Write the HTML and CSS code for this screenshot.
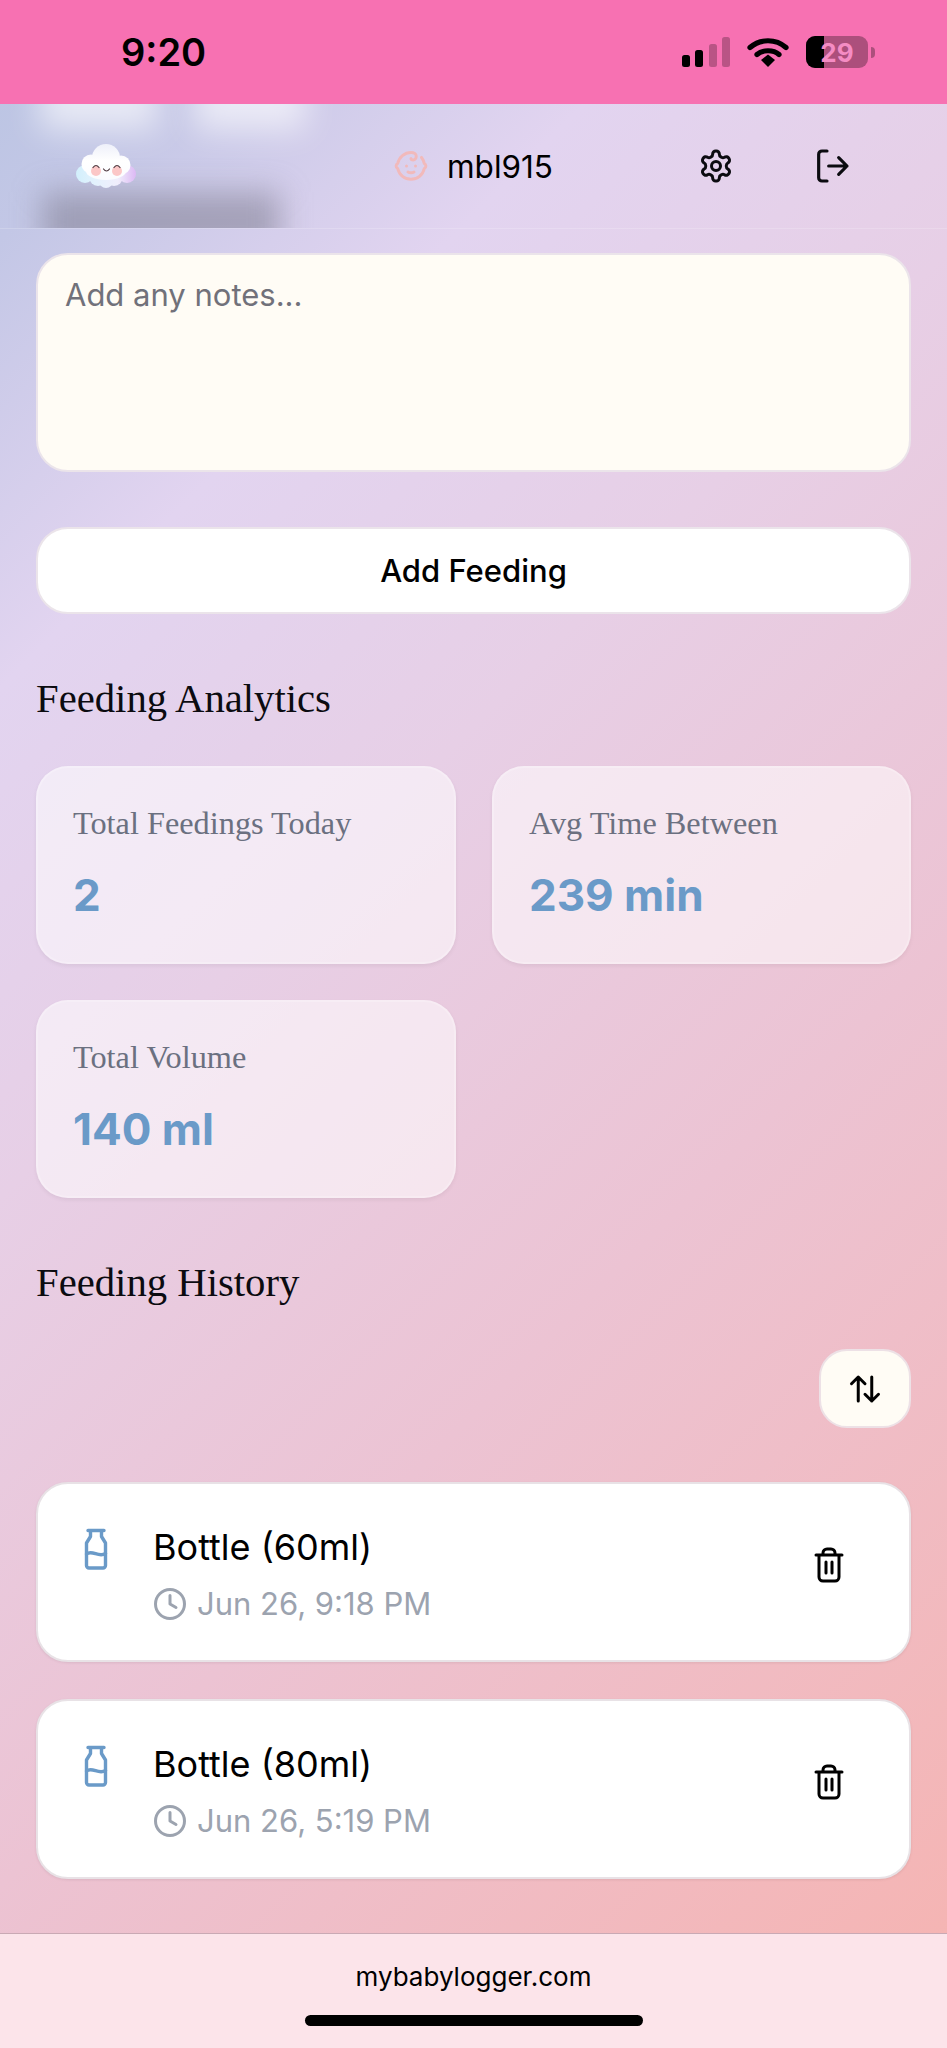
FILE: index.html
```html
<!DOCTYPE html>
<html>
<head>
  <meta charset="UTF-8">
  <title>My Baby Logger</title>
  <link rel="stylesheet" href="styles.css">
</head>
<body>
  <div class="status-bar">
    <span class="clock">9:20</span>
    <div class="status-icons">
      <svg class="signal" width="48" height="30" viewBox="0 0 48 30">
        <rect x="0" y="18" width="8" height="12" rx="2.500" fill="#000"/>
        <rect x="13" y="13" width="8" height="17" rx="2.500" fill="#000"/>
        <rect x="27" y="7" width="8" height="23" rx="2.500" fill="#000" opacity=".25"/>
        <rect x="40" y="0" width="8" height="30" rx="2.500" fill="#000" opacity=".25"/>
      </svg>
      <svg class="wifi" width="42" height="30" viewBox="0 0 42 30">
        <path d="M3 10.500C13 1.500 29 1.500 39 10.500" fill="none" stroke="#000" stroke-width="5.200" stroke-linecap="round"/>
        <path d="M10 17.500C15.500 12.500 26.500 12.500 32 17.500" fill="none" stroke="#000" stroke-width="5.200" stroke-linecap="round"/>
        <path d="M14 23L21 17.500L28 23L21 30Z" fill="#000"/>
      </svg>
      <div class="battery">
        <div class="battery-body">
          <div class="battery-fill"></div>
          <span class="battery-num">29</span>
        </div>
        <span class="battery-cap"></span>
      </div>
    </div>
  </div>

  <header class="app-header">
    <div class="blur-top blur-top-left"></div>
    <div class="blur-top blur-top-right"></div>
    <div class="blur-bottom"></div>
    <svg class="logo" width="60" height="44" viewBox="0 0 60 44">
      <defs>
        <linearGradient id="cloudBase" x1="0" y1="0" x2="60" y2="0" gradientUnits="userSpaceOnUse">
          <stop offset="0" stop-color="#d2effc"/>
          <stop offset=".3" stop-color="#e2f2fd"/>
          <stop offset=".7" stop-color="#f0eefc"/>
          <stop offset="1" stop-color="#dcb8f4"/>
        </linearGradient>
        <linearGradient id="cloudTop" x1="0" y1="0" x2="0" y2="34" gradientUnits="userSpaceOnUse">
          <stop offset="0" stop-color="#eef0fa"/>
          <stop offset=".5" stop-color="#ffffff"/>
          <stop offset="1" stop-color="#fbfcff"/>
        </linearGradient>
      </defs>
      <g fill="url(#cloudBase)">
        <circle cx="9" cy="30" r="9"/>
        <circle cx="51" cy="30" r="9"/>
        <circle cx="22" cy="33" r="9"/>
        <circle cx="38" cy="33" r="9"/>
        <circle cx="30" cy="37" r="7"/>
      </g>
      <g fill="url(#cloudTop)">
        <circle cx="30" cy="14" r="14"/>
        <circle cx="15" cy="20" r="9.500"/>
        <circle cx="45" cy="21" r="9.500"/>
        <ellipse cx="30" cy="27" rx="20" ry="9"/>
      </g>
      <circle cx="20" cy="27" r="5" fill="#fbb4b4" opacity=".75"/>
      <circle cx="41" cy="27" r="5" fill="#fbb4b4" opacity=".75"/>
      <path d="M17 23.500Q20 19.500 23 23.500M38 23.500Q41 19.500 44 23.500M27.500 25Q30.500 29 33.500 25" fill="none" stroke="#4f3a40" stroke-width="1.200" stroke-linecap="round"/>
    </svg>
    <div class="user">
      <svg class="baby-icon" width="36" height="36" viewBox="0 0 24 24" fill="none" stroke="#f6b6b3" stroke-width="2" stroke-linecap="round" stroke-linejoin="round">
        <path d="M9 12h.01M15 12h.01M10 16c.5.3 1.200.5 2 .5s1.500-.2 2-.5"/>
        <path d="M19 6.300a9 9 0 0 1 1.800 3.900 2 2 0 0 1 0 3.600 9 9 0 0 1-17.600 0 2 2 0 0 1 0-3.600A9 9 0 0 1 12 3c2 0 3.500 1.100 3.500 2.500s-.9 2.500-2 2.500c-.8 0-1.500-.4-1.500-1"/>
      </svg>
      <span class="username">mbl915</span>
    </div>
    <svg class="settings-btn" width="36" height="36" viewBox="0 0 24 24" fill="none" stroke="#0b0b10" stroke-width="2" stroke-linecap="round" stroke-linejoin="round">
      <path d="M12.220 2h-.44a2 2 0 0 0-2 2v.18a2 2 0 0 1-1 1.730l-.43.250a2 2 0 0 1-2 0l-.15-.080a2 2 0 0 0-2.730.730l-.22.380a2 2 0 0 0 .730 2.730l.15.100a2 2 0 0 1 1 1.720v.510a2 2 0 0 1-1 1.740l-.15.090a2 2 0 0 0-.730 2.730l.22.380a2 2 0 0 0 2.730.730l.15-.080a2 2 0 0 1 2 0l.43.250a2 2 0 0 1 1 1.730V20a2 2 0 0 0 2 2h.44a2 2 0 0 0 2-2v-.18a2 2 0 0 1 1-1.730l.43-.250a2 2 0 0 1 2 0l.15.080a2 2 0 0 0 2.730-.730l.22-.390a2 2 0 0 0-.730-2.730l-.15-.080a2 2 0 0 1-1-1.740v-.500a2 2 0 0 1 1-1.740l.15-.090a2 2 0 0 0 .730-2.730l-.22-.380a2 2 0 0 0-2.730-.730l-.15.080a2 2 0 0 1-2 0l-.43-.250a2 2 0 0 1-1-1.730V4a2 2 0 0 0-2-2z"/>
      <circle cx="12" cy="12" r="3"/>
    </svg>
    <svg class="logout-btn" width="40" height="40" viewBox="0 0 24 24" fill="none" stroke="#0b0b10" stroke-width="1.900" stroke-linecap="round" stroke-linejoin="round">
      <path d="M9 3H6a2 2 0 0 0-2 2v14a2 2 0 0 0 2 2h3"/>
      <path d="M10 12h11M16 7l5 5-5 5"/>
    </svg>
  </header>

  <main class="content">
    <div class="notes">Add any notes...</div>
    <button class="add-btn">Add Feeding</button>

    <h2 class="section-title analytics-title">Feeding Analytics</h2>
    <div class="stats-grid">
      <div class="stat-card">
        <div class="stat-label">Total Feedings Today</div>
        <div class="stat-value">2</div>
      </div>
      <div class="stat-card">
        <div class="stat-label">Avg Time Between</div>
        <div class="stat-value">239 min</div>
      </div>
      <div class="stat-card">
        <div class="stat-label">Total Volume</div>
        <div class="stat-value">140 ml</div>
      </div>
    </div>

    <h2 class="section-title history-title">Feeding History</h2>
    <div class="sort-row">
      <button class="sort-btn">
        <svg width="36" height="36" viewBox="0 0 24 24" fill="none" stroke="#000" stroke-width="2" stroke-linecap="round" stroke-linejoin="round">
          <path d="M7.500 20V4M3 8.500L7.500 4L12 8.500M16.500 4V20M12 15.500L16.500 20L21 15.500"/>
        </svg>
      </button>
    </div>

    <div class="feed-list">
      <div class="feed-item">
        <svg class="bottle" width="24" height="42" viewBox="0 0 24 42" fill="none" stroke="#6a9ac8" stroke-width="3.400" stroke-linecap="round" stroke-linejoin="round">
          <path d="M4 2.500H20M6.500 2.500V8.500L2.500 15V37.500A2.500 2.500 0 0 0 5 40H19A2.500 2.500 0 0 0 21.500 37.500V15L17.500 8.500V2.500"/>
          <path d="M2.500 26C8 21.500 15 30 21.500 25.500"/>
        </svg>
        <div class="feed-info">
          <div class="feed-title">Bottle (60ml)</div>
          <div class="feed-time">
            <svg width="34" height="34" viewBox="0 0 34 34" fill="none" stroke="#9ca3af" stroke-width="3" stroke-linecap="round" stroke-linejoin="round">
              <circle cx="17" cy="17" r="14.500"/>
              <path d="M17 8.500V17L23 20.500"/>
            </svg>
            <span>Jun 26, 9:18 PM</span>
          </div>
        </div>
        <svg class="trash" width="32" height="36" viewBox="0 0 32 36" fill="none" stroke="#000" stroke-width="3" stroke-linecap="round" stroke-linejoin="round">
          <path d="M3 8H29M6 8V30A4 4 0 0 0 10 34H22A4 4 0 0 0 26 30V8M10 8V6A4 4 0 0 1 14 2H18A4 4 0 0 1 22 6V8M13 15V26M19 15V26"/>
        </svg>
      </div>
      <div class="feed-item">
        <svg class="bottle" width="24" height="42" viewBox="0 0 24 42" fill="none" stroke="#6a9ac8" stroke-width="3.400" stroke-linecap="round" stroke-linejoin="round">
          <path d="M4 2.500H20M6.500 2.500V8.500L2.500 15V37.500A2.500 2.500 0 0 0 5 40H19A2.500 2.500 0 0 0 21.500 37.500V15L17.500 8.500V2.500"/>
          <path d="M2.500 26C8 21.500 15 30 21.500 25.500"/>
        </svg>
        <div class="feed-info">
          <div class="feed-title">Bottle (80ml)</div>
          <div class="feed-time">
            <svg width="34" height="34" viewBox="0 0 34 34" fill="none" stroke="#9ca3af" stroke-width="3" stroke-linecap="round" stroke-linejoin="round">
              <circle cx="17" cy="17" r="14.500"/>
              <path d="M17 8.500V17L23 20.500"/>
            </svg>
            <span>Jun 26, 5:19 PM</span>
          </div>
        </div>
        <svg class="trash" width="32" height="36" viewBox="0 0 32 36" fill="none" stroke="#000" stroke-width="3" stroke-linecap="round" stroke-linejoin="round">
          <path d="M3 8H29M6 8V30A4 4 0 0 0 10 34H22A4 4 0 0 0 26 30V8M10 8V6A4 4 0 0 1 14 2H18A4 4 0 0 1 22 6V8M13 15V26M19 15V26"/>
        </svg>
      </div>
    </div>
  </main>

  <footer class="url-bar">
    <span class="url">mybabylogger.com</span>
    <div class="home-bar"></div>
  </footer>
</body>
</html>
```

FILE: styles.css
```css
* {
  box-sizing: border-box;
}
html, body {
  margin: 0;
  padding: 0;
}
body {
  width: 947px;
  height: 2048px;
  overflow: hidden;
  display: flex;
  flex-direction: column;
  font-family: Inter, "Liberation Sans", sans-serif;
  color: #000;
  background: linear-gradient(135deg, #b8c4e2 0%, #c3c7e6 8%, #e2d4f0 23%, #e7cfe6 40%, #ecc3d3 63%, #f6b3b0 100%);
}

/* phone status bar */
.status-bar {
  height: 104px;
  flex-shrink: 0;
  background-color: #f771b2;
  display: flex;
  align-items: center;
  justify-content: space-between;
  padding: 0 72px 0 121px;
}
.clock {
  font-size: 38px;
  font-weight: 600;
}
.status-icons {
  display: flex;
  align-items: center;
  gap: 17px;
}
.battery {
  display: flex;
  align-items: center;
  gap: 3px;
}
.battery-body {
  position: relative;
  width: 62px;
  height: 32px;
  border-radius: 9px;
  background-color: rgba(0, 0, 0, 0.3);
  overflow: hidden;
  display: flex;
  align-items: center;
  justify-content: center;
}
.battery-fill {
  position: absolute;
  top: 0;
  left: 0;
  bottom: 0;
  width: 18px;
  background-color: #000;
}
.battery-num {
  position: relative;
  font-size: 26px;
  font-weight: 700;
  color: #f58cc4;
}
.battery-cap {
  width: 4px;
  height: 11px;
  border-radius: 0 4px 4px 0;
  background-color: rgba(0, 0, 0, 0.3);
}

/* app header */
.app-header {
  position: relative;
  height: 125px;
  flex-shrink: 0;
  display: flex;
  align-items: center;
  padding: 0 95px 0 76px;
  border-bottom: 1px solid rgba(255, 255, 255, 0.18);
  overflow: hidden;
}
.blur-top {
  position: absolute;
  top: -30px;
  height: 56px;
  background-color: rgba(255, 255, 255, 0.62);
  filter: blur(16px);
}
.blur-top-left {
  left: 40px;
  width: 118px;
}
.blur-top-right {
  left: 194px;
  width: 112px;
}
.blur-bottom {
  position: absolute;
  bottom: -24px;
  left: 42px;
  width: 238px;
  height: 60px;
  background-color: rgba(120, 118, 135, 0.5);
  filter: blur(15px);
}
.logo {
  position: relative;
}
.user {
  display: flex;
  align-items: center;
  gap: 18px;
  margin-left: 257px;
}
.baby-icon {
  opacity: 0.85;
}
.username {
  font-size: 31.500px;
}
.settings-btn {
  margin-left: auto;
}
.logout-btn {
  margin-left: 78px;
}

/* main column */
.content {
  flex: 1;
  padding: 24px 36px 0 36px;
}
.notes {
  height: 219px;
  padding: 21px 27px;
  background-color: #fffcf5;
  border: 2px solid #ebe4ea;
  border-radius: 32px;
  font-size: 31px;
  color: #71717a;
}
.add-btn {
  display: block;
  width: 100%;
  height: 87px;
  margin-top: 55px;
  background-color: #fff;
  border: 2px solid #ebe4ea;
  border-radius: 32px;
  font-family: Inter, sans-serif;
  font-size: 31px;
  font-weight: 450;
  color: #000;
}
.section-title {
  margin: 0;
  font-family: "Liberation Serif", serif;
  font-size: 40.700px;
  font-weight: 400;
  line-height: 48px;
  color: #0b0b10;
}
.analytics-title {
  margin-top: 61px;
}
.stats-grid {
  display: grid;
  grid-template-columns: 420px 419px;
  gap: 36px;
  margin-top: 43px;
}
.stat-card {
  height: 198px;
  padding: 35px 34px 0 35px;
  background-color: rgba(255, 255, 255, 0.55);
  border: 2px solid rgba(255, 255, 255, 0.2);
  border-radius: 32px;
  box-shadow: 0 2px 4px rgba(0, 0, 0, 0.06);
}
.stat-label {
  font-family: "Liberation Serif", serif;
  font-size: 32.300px;
  line-height: 40px;
  color: #6b7080;
}
.stat-value {
  margin-top: 26px;
  font-size: 44px;
  font-weight: 700;
  line-height: 52px;
  color: #6a9ac8;
}
.history-title {
  margin-top: 61px;
}
.sort-row {
  display: flex;
  justify-content: flex-end;
  margin-top: 42px;
}
.sort-btn {
  width: 92px;
  height: 79px;
  padding: 0;
  display: flex;
  align-items: center;
  justify-content: center;
  background-color: #fffcf5;
  border: 2px solid #ede1e6;
  border-radius: 28px;
}
.feed-list {
  display: flex;
  flex-direction: column;
  gap: 37px;
  margin-top: 54px;
}
.feed-item {
  height: 180px;
  display: flex;
  align-items: flex-start;
  padding: 44px 64px 0 46px;
  background-color: #fff;
  border-radius: 32px;
  border: 2px solid #e8e2e6;
  box-shadow: 0 1px 3px rgba(0, 0, 0, 0.08);
}
.feed-info {
  flex: 1;
  margin-left: 45px;
  margin-top: -3px;
}
.feed-title {
  font-size: 36px;
  line-height: 44px;
}
.feed-time {
  display: flex;
  align-items: center;
  gap: 10px;
  margin-top: 16px;
  font-size: 31px;
  color: #9ca3af;
}
.trash {
  margin-top: 19px;
}

/* browser url bar */
.url-bar {
  height: 115px;
  flex-shrink: 0;
  background-color: #fce4ea;
  border-top: 1px solid #c9a9b4;
  display: flex;
  flex-direction: column;
  align-items: center;
  padding-top: 27px;
}
.url {
  font-size: 26px;
  line-height: 32px;
}
.home-bar {
  width: 338px;
  height: 11px;
  margin-top: 22px;
  border-radius: 6px;
  background-color: #000;
}
```
